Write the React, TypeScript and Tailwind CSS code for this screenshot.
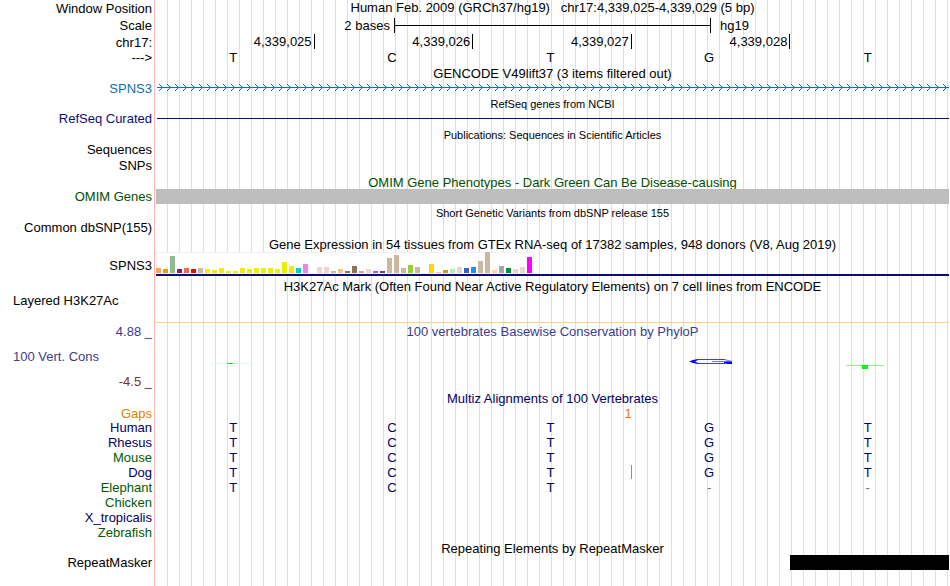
import type { ReactNode } from "react";

const GRID =
  "bg-[repeating-linear-gradient(to_right,transparent_0px,transparent_11px,#dcdcfa_11px,#dcdcfa_12px)]";

type RowProps = {
  height: string;
  label?: string;
  labelClass?: string;
  children?: ReactNode;
};

function Row({ height, label, labelClass = "justify-end", children }: RowProps) {
  return (
    <div className={`flex ${height}`}>
      <div
        className={`flex w-[155px] shrink-0 items-center border-r border-[#ffb4b4] pr-[2px] pl-[13px] whitespace-pre ${labelClass}`}
      >
        {label}
      </div>
      <div className={`ml-px mr-px min-w-0 flex-1 ${GRID}`}>{children}</div>
    </div>
  );
}

function Title({ children, className = "text-[13px]" }: { children: ReactNode; className?: string }) {
  return (
    <h2 className={`flex h-full items-center justify-center whitespace-pre ${className}`}>{children}</h2>
  );
}

function Bases({ bases }: { bases: string }) {
  return (
    <div className="grid h-full grid-cols-5 items-center text-center">
      {bases.split("").map((base, i) => (
        <span key={i} className={base === "-" ? "pr-1 text-[#6a6aa8]" : "pr-1"}>
          {base}
        </span>
      ))}
    </div>
  );
}

const tissues: [string, number][] = [
  ["#ffa54f", 5], ["#ee9a00", 4], ["#8fbc8f", 17], ["#8b1c62", 4], ["#ee6a50", 5], ["#ff0000", 4],
  ["#cdb79e", 5], ["#eeee00", 4], ["#eeee00", 3], ["#eeee00", 5], ["#eeee00", 2], ["#eeee00", 2],
  ["#eeee00", 5], ["#eeee00", 4], ["#eeee00", 5], ["#eeee00", 5], ["#eeee00", 5], ["#eeee00", 4],
  ["#eeee00", 11], ["#eeee00", 7], ["#00cdcd", 5], ["#ee82ee", 9], ["#9ac0cd", 0], ["#eed5d2", 6],
  ["#eed5d2", 6], ["#cdb79e", 2], ["#eec591", 4], ["#8b7355", 2], ["#8b7355", 7], ["#cdaa7d", 2],
  ["#eed5d2", 4], ["#b452cd", 2], ["#7a378b", 2], ["#cdb79e", 15], ["#cdb79e", 18], ["#cdb79e", 5],
  ["#9acd32", 8], ["#cdb79e", 6], ["#7a67ee", 0], ["#ffd700", 9], ["#ffb6c1", 1], ["#cd9b1d", 3],
  ["#b4eeb4", 4], ["#d9d9d9", 6], ["#3a5fcd", 5], ["#1e90ff", 6], ["#cdb79e", 12], ["#cdb79e", 21],
  ["#ffd39b", 3], ["#a6a6a6", 7], ["#008b45", 5], ["#eed5d2", 4], ["#eed5d2", 6], ["#ff00ff", 16],
];

const species = [
  { name: "Human", bases: "TCTGT", dark: true },
  { name: "Rhesus", bases: "TCTGT", dark: true },
  { name: "Mouse", bases: "TCTGT", dark: false },
  { name: "Dog", bases: "TCTGT", dark: true },
  { name: "Elephant", bases: "TCT--", dark: false },
  { name: "Chicken", bases: "", dark: false },
  { name: "X_tropicalis", bases: "", dark: true },
  { name: "Zebrafish", bases: "", dark: false },
];

export default function App() {
  return (
    <main className="flex min-h-screen flex-col overflow-hidden bg-white font-['Liberation_Sans',Arial,sans-serif] text-[13px] leading-[15px] text-black">
      <Row height="h-[17px]" label="Window Position">
        <Title className="pb-[2px] text-[13px]">
          {"Human Feb. 2009 (GRCh37/hg19)   chr17:4,339,025-4,339,029 (5 bp)"}
        </Title>
      </Row>
      <Row height="h-[17px]" label="Scale">
        <div className="flex h-full items-center">
          <span className="w-[30%] pr-1 text-right">2 bases</span>
          <span className="flex h-[15px] w-[40%] items-center border-x border-black">
            <span className="h-px w-full bg-black" />
          </span>
          <span className="pl-[9px]">hg19</span>
        </div>
      </Row>
      <Row height="h-[16px]" label="chr17:">
        <div className="grid grid-cols-5 text-right">
          {["4,339,025", "4,339,026", "4,339,027", "4,339,028"].map((pos) => (
            <span key={pos} className="h-[15px] border-r border-black pr-[2px]">
              {pos}
            </span>
          ))}
        </div>
      </Row>
      <Row height="h-[15px]" label="--->">
        <div className="h-full pb-[2px]">
          <Bases bases="TCTGT" />
        </div>
      </Row>

      <Row height="h-[17px]">
        <Title>GENCODE V49lift37 (3 items filtered out)</Title>
      </Row>
      <Row height="h-[12px]" label="SPNS3" labelClass="justify-end text-[#0c6fb0]">
        <svg className="block h-[12px] w-full" shapeRendering="crispEdges" aria-hidden="true">
          <defs>
            <pattern id="strand" width="8" height="12" patternUnits="userSpaceOnUse">
              <path
                d="M3 2h1v1h-1zM4 3h1v1h-1zM5 4h1v1h-1zM5 6h1v1h-1zM4 7h1v1h-1zM3 8h1v1h-1z"
                fill="#0c6fb0"
              />
            </pattern>
          </defs>
          <rect x="1" width="100%" height="12" fill="url(#strand)" />
          <rect x="1" y="5" width="100%" height="1" fill="#0c6fb0" />
        </svg>
      </Row>

      <Row height="h-[18px]">
        <Title className="pt-[2px] text-[11px]">RefSeq genes from NCBI</Title>
      </Row>
      <Row height="h-[13px]" label="RefSeq Curated" labelClass="justify-end text-[#0c0c78]">
        <div className="flex h-full items-center pl-px">
          <div className="h-px w-full bg-[#0c0c78]" />
        </div>
      </Row>

      <Row height="h-[16px]">
        <Title className="pt-1 text-[11px]">Publications: Sequences in Scientific Articles</Title>
      </Row>
      <Row height="h-[16px]" label="Sequences" />
      <Row height="h-[16px]" label="SNPs" />

      <Row height="h-[16px]">
        <Title className="pt-[2px] text-[13px] text-[#005000]">
          OMIM Gene Phenotypes - Dark Green Can Be Disease-causing
        </Title>
      </Row>
      <Row height="h-[15px]" label="OMIM Genes" labelClass="justify-end text-[#005000]">
        <div className="h-full bg-[#bebebe]" />
      </Row>

      <Row height="h-[16px]">
        <Title className="pt-[2px] text-[11px]">Short Genetic Variants from dbSNP release 155</Title>
      </Row>
      <Row height="h-[14px]" label="Common dbSNP(155)" />

      <Row height="h-[18px]">
        <Title className="pt-[2px] text-[13px]">
          Gene Expression in 54 tissues from GTEx RNA-seq of 17382 samples, 948 donors (V8, Aug 2019)
        </Title>
      </Row>
      <Row height="h-[26px]" label="SPNS3">
        <div className="flex h-[22px] w-[378px] items-end gap-[2px] bg-white pb-px shadow-[inset_0_0_0_1px_#f0f0f0]">
          {tissues.map(([color, height], i) => (
            <span key={i} className="w-[5px] shrink-0" style={{ backgroundColor: color, height }} />
          ))}
        </div>
        <div className="h-[2px] bg-[#0c0c78]" />
      </Row>

      <Row height="h-[16px]">
        <Title>H3K27Ac Mark (Often Found Near Active Regulatory Elements) on 7 cell lines from ENCODE</Title>
      </Row>
      <Row height="h-[29px]" label="Layered H3K27Ac" labelClass="justify-start pb-4">
        <div className="h-full border-b border-[#ffd27f]" />
      </Row>

      <Row height="h-[17px]" label="4.88 _" labelClass="justify-end text-[#3c3c8c]">
        <Title className="text-[13px] text-[#3c3c8c]">100 vertebrates Basewise Conservation by PhyloP</Title>
      </Row>
      <Row height="h-[32px]" label="100 Vert. Cons" labelClass="justify-start text-[#3c3c8c]">
        <svg className="block h-[32px] w-full" viewBox="0 0 793 32" preserveAspectRatio="none" aria-hidden="true">
          <rect x="55" y="23" width="38" height="1" fill="#e0fae4" />
          <rect x="71" y="23" width="6" height="1" fill="#1edc1e" />
          <rect x="541" y="19" width="28" height="1" fill="#3c3cff" />
          <rect x="541" y="23" width="28" height="1" fill="#3c3cff" />
          <path d="M533 21.5L537 20L542 19V20L539 21.5L542 23V24L537 23z" fill="#0000ff" />
          <path d="M568 19L572 20L576 21V22H570V21L574 21L568 20z" fill="#5050ff" />
          <rect x="556" y="21" width="14" height="1" fill="#7878ff" />
          <path d="M568 22H576V24H571L568 23z" fill="#0000ff" />
          <rect x="690" y="25" width="38" height="1" fill="#8cf58c" />
          <rect x="706" y="25" width="6" height="4" fill="#00ff00" />
        </svg>
      </Row>
      <Row height="h-[18px]" label="-4.5 _" labelClass="justify-end text-[#783232]" />

      <Row height="h-[16px]">
        <Title className="text-[13px] text-[#000064]">Multiz Alignments of 100 Vertebrates</Title>
      </Row>
      <Row height="h-[14px]" label="Gaps" labelClass="justify-end text-[#e08200]">
        <div className="grid h-full grid-cols-5 items-center text-right text-[#e08200]">
          <span className="col-start-3">1</span>
        </div>
      </Row>
      {species.map(({ name, bases, dark }) => (
        <Row
          key={name}
          height="h-[15px]"
          label={name}
          labelClass={dark ? "justify-end text-[#000064]" : "justify-end text-[#005a00]"}
        >
          <div className="relative h-full text-[#000064]">
            <Bases bases={bases} />
            {name === "Dog" && (
              <span className="absolute top-0 right-[40%] h-[14px] w-px bg-[#e08200]" />
            )}
          </div>
        </Row>
      ))}

      <Row height="h-[15px]">
        <Title className="pt-[2px] text-[13px]">Repeating Elements by RepeatMasker</Title>
      </Row>
      <Row height="h-[15px]" label="RepeatMasker">
        <div className="ml-auto h-full w-1/5 bg-black" />
      </Row>
      <Row height="flex-1" />
    </main>
  );
}
